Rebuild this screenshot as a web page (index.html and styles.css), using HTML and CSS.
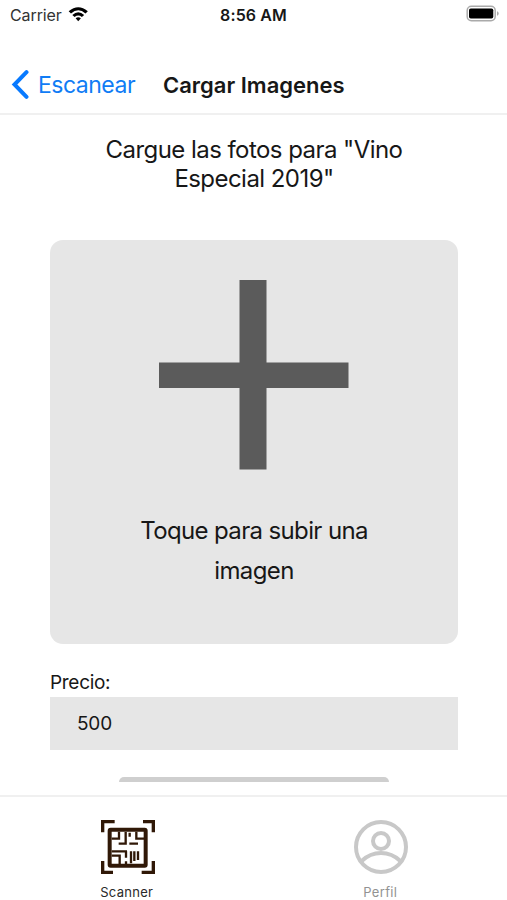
FILE: index.html
```html
<!DOCTYPE html>
<html lang="es">
<head>
<meta charset="utf-8">
<meta name="viewport" content="width=device-width, initial-scale=1">
<title>Cargar Imagenes</title>
<link rel="stylesheet" href="styles.css">
</head>
<body>
<div class="app">
  <div class="status">
    <div class="carrier"><span>Carrier</span>
      <svg class="wifi" viewBox="204 19 62 47"><path d="M206 35Q235 10 264 35L257 42Q235 22 213 42Z"/><path d="M217 46Q235 30 253 46L246 52Q235 43 224 52Z"/><path d="M227 56Q235 50 243 56L235 65Z"/></svg>
    </div>
    <div class="clock">8:56 AM</div>
    <svg class="battery" viewBox="0 0 33 17"><rect x="1.2" y="1.2" width="28" height="14.6" rx="4.2" fill="#fff" stroke="#aaa" stroke-width="1.5"/><rect x="3" y="3.4" width="24.3" height="10.2" rx="1.8"/><path d="M31 6.3q1.7.5 1.7 2.2T31 10.7Z" fill="#aaa"/></svg>
  </div>
  <header class="nav">
    <a class="back"><svg class="chevron" viewBox="0 0 18 29"><path d="M15.500 2.200 3.500 14.500 15.500 26.800"/></svg><span>Escanear</span></a>
    <h1 class="title">Cargar Imagenes</h1>
  </header>
  <main class="content">
    <p class="intro">Cargue las fotos para "Vino<br>Especial 2019"</p>
    <div class="upload">
      <svg class="plus" viewBox="0 0 190 190"><path d="M80.5 0h27v82.500h82v25.500h-82v81.500h-27v-81.500H0v-25.500h80.500Z"/></svg>
      <p class="upload-text">Toque para subir una<br>imagen</p>
    </div>
    <label class="label">Precio:</label>
    <div class="field">500</div>
    <div class="peek"><div class="button"></div></div>
  </main>
  <nav class="tabs">
    <div class="tab active">
      <svg class="tab-icon" viewBox="34 30 162 162" fill="none" stroke="#301807">
        <path stroke-width="10" d="M75 35H39V67M160 35H191V67M39 153V187H70M191 153V187H156"/>
        <rect x="60" y="59" width="108" height="108" rx="3" stroke-width="12"/>
        <path stroke-width="7" d="M66 86H88V65M140 65V86H163M66 137H90V163M108 66V101H87M120 80V68M119 101H145M66 124H112M109 124V143M124 124V148M109 163V154M124 160V147M134 124V153M145 124V150"/>
      </svg>
      <span class="tab-name">Scanner</span>
    </div>
    <div class="tab">
      <svg class="tab-icon" viewBox="28 29 162 162" fill="none" stroke="#c8c8c8" stroke-width="12"><circle cx="109" cy="110" r="75"/><circle cx="109" cy="92" r="24"/><path d="M51 152Q76 128 109 128T167 152"/></svg>
      <span class="tab-name">Perfil</span>
    </div>
  </nav>
</div>
</body>
</html>
```
FILE: styles.css
```css
* { box-sizing: border-box; }
body { margin: 0; background: #fff; color: #171717; font-family: Inter, "Liberation Sans", sans-serif; }
h1, p { margin: 0; font-weight: 400; }
svg { display: block; flex: none; }
.app { width: 507px; height: 900px; display: flex; flex-direction: column; overflow: hidden; }
.status { height: 30px; flex: none; display: grid; grid-template-columns: 1fr auto 1fr; padding: 0 8px 0 10px; line-height: 30px; }
.carrier { display: flex; gap: 6px; font-size: 16px; letter-spacing: -0.1px; color: #333; }
.wifi { width: 20.500px; height: 15.500px; margin-top: 6px; }
.clock { font-size: 16px; font-weight: 600; margin-left: -2px; letter-spacing: 0.1px; }
.battery { width: 33px; height: 17px; margin-top: 5px; justify-self: end; }
.nav { height: 85px; flex: none; display: flex; align-items: center; padding: 26px 0 0 11px; border-bottom: 2px solid #f0f0f0; }
.back { display: flex; align-items: center; color: #107cf5; font-size: 23px; letter-spacing: -0.5px; width: 152px; }
.chevron { width: 18px; height: 29px; margin-right: 9px; fill: none; stroke: #087aff; stroke-width: 4; stroke-linecap: round; }
.title { font-size: 22px; font-weight: 600; white-space: nowrap; }
.content { flex: 1; min-height: 0; padding: 20px 49px 0 50px; }
.intro { font-size: 24px; line-height: 29px; letter-spacing: -0.55px; text-align: center; white-space: nowrap; }
.upload { height: 404px; margin-top: 46.500px; padding-top: 40.500px; border-radius: 13px; background: #e6e6e6; display: flex; flex-direction: column; align-items: center; }
.plus { width: 190px; height: 190px; fill: #5b5b5b; }
.upload-text { margin-top: 41px; font-size: 24px; line-height: 40px; letter-spacing: -0.63px; text-align: center; white-space: nowrap; }
.label { display: block; margin-top: 27px; height: 26px; font-size: 19px; line-height: 24px; letter-spacing: -0.3px; }
.field { height: 53.500px; background: #e6e6e6; padding-left: 27px; font-size: 19px; line-height: 54px; letter-spacing: -0.2px; }
.peek { height: 5px; margin: 27px 69px 0 69px; overflow: hidden; }
.button { height: 50px; border-radius: 5px; background: #cfcfcf; }
.tabs { height: 105px; flex: none; border-top: 2px solid #f0f0f0; display: grid; grid-template-columns: 1fr 1fr; }
.tab { display: flex; flex-direction: column; align-items: center; padding-top: 23px; color: #929292; }
.tab.active { color: #292929; }
.tab-icon { width: 54px; height: 54px; margin-left: 2px; }
.tab-name { font-size: 13px; line-height: 18px; letter-spacing: 0.3px; margin-top: 9px; }
```
